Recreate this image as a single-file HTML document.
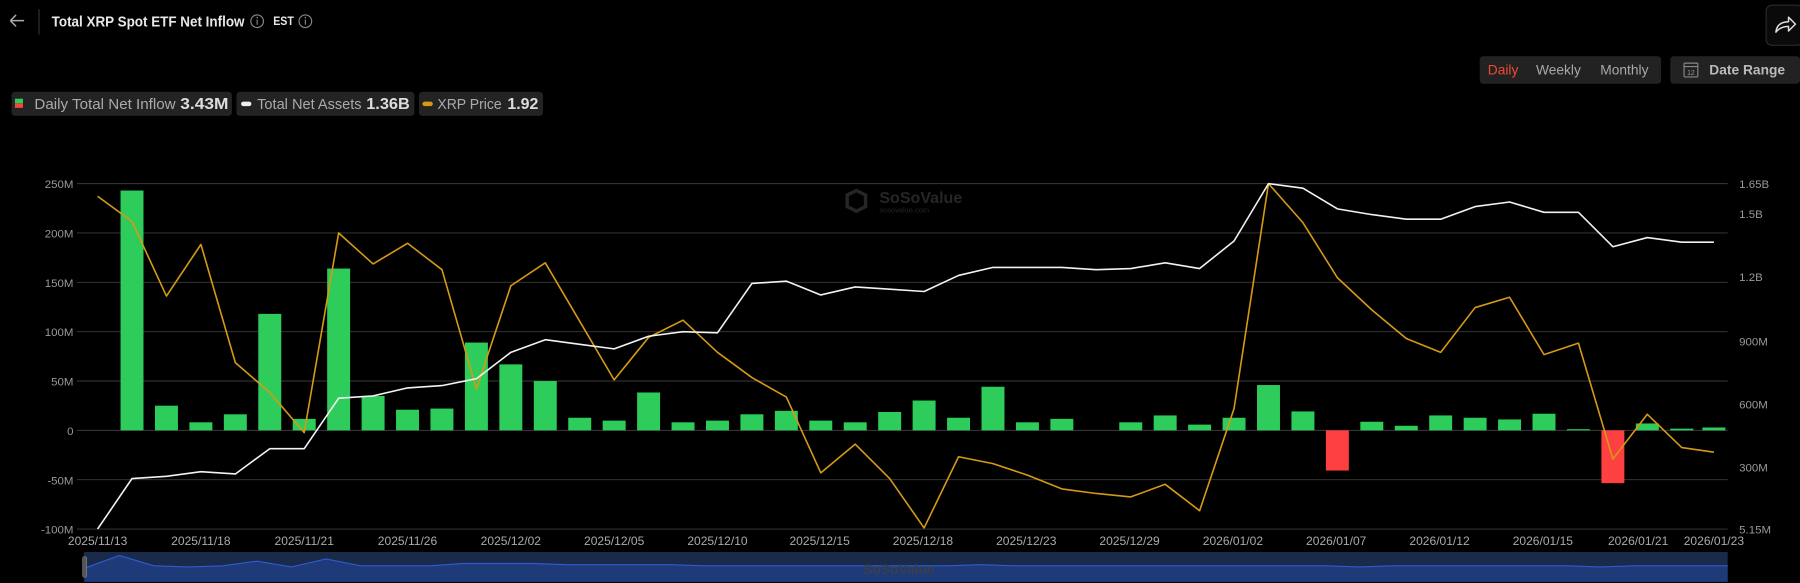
<!DOCTYPE html>
<html><head><meta charset="utf-8"><style>
html,body{margin:0;padding:0;background:#000;width:1800px;height:583px;overflow:hidden}
svg{display:block}
text{font-family:"Liberation Sans",sans-serif}
</style></head><body>
<svg width="1800" height="583" viewBox="0 0 1568 508" preserveAspectRatio="none" xmlns="http://www.w3.org/2000/svg">
<rect width="1568" height="508" fill="#000"/>
<!-- header -->
<path d="M9 18 H21 M9 18 L14 13 M9 18 L14 23" stroke="#aaa" stroke-width="1.3" fill="none"/>
<line x1="34" y1="8" x2="34" y2="30" stroke="#333"/>
<text x="45" y="23" font-size="12.5" font-weight="bold" fill="#e8e8e8" textLength="168" lengthAdjust="spacingAndGlyphs">Total XRP Spot ETF Net Inflow</text>
<circle cx="224" cy="18.5" r="5.5" stroke="#888" fill="none"/><line x1="224" y1="17" x2="224" y2="21.5" stroke="#888"/><circle cx="224" cy="15.3" r="0.7" fill="#888"/>
<text x="238" y="22" font-size="10.5" font-weight="bold" fill="#e8e8e8" textLength="18" lengthAdjust="spacingAndGlyphs">EST</text>
<circle cx="266" cy="18.5" r="5.5" stroke="#888" fill="none"/><line x1="266" y1="17" x2="266" y2="21.5" stroke="#888"/><circle cx="266" cy="15.3" r="0.7" fill="#888"/>
<rect x="1538.5" y="4.5" width="32" height="35" rx="5" fill="#0a0a0a" stroke="#2a2a2a"/>
<path d="M1547 28 Q1548 19 1558 19 V15 L1564 21 L1558 27 V23 Q1551 23 1547 28 Z" stroke="#ddd" stroke-width="1.3" fill="none" stroke-linejoin="round"/>
<!-- toggle -->
<rect x="1289" y="49" width="158" height="24" rx="3" fill="#222"/>
<text x="1296" y="65" font-size="12" fill="#ef4a32">Daily</text>
<text x="1338" y="65" font-size="12" fill="#a9a9a9">Weekly</text>
<text x="1394" y="65" font-size="12" fill="#a9a9a9">Monthly</text>
<rect x="1455" y="49" width="113" height="24" rx="3" fill="#222"/>
<rect x="1467" y="55" width="12" height="12" rx="1" stroke="#888" fill="none"/><line x1="1467" y1="58" x2="1479" y2="58" stroke="#888"/>
<text x="1473" y="65.5" font-size="6" fill="#999" text-anchor="middle">12</text>
<text x="1489" y="65" font-size="12" font-weight="bold" fill="#bbb">Date Range</text>
<!-- legend -->
<rect x="10" y="80" width="192" height="21" rx="3" fill="#232323"/>
<rect x="13" y="86" width="7" height="4" fill="#2ecc5a"/><rect x="13" y="90" width="7" height="4" fill="#ef4a3a"/>
<text x="30" y="95" font-size="12.5" fill="#aaa" textLength="123" lengthAdjust="spacingAndGlyphs">Daily Total Net Inflow</text>
<text x="157" y="95" font-size="13.5" font-weight="bold" fill="#ddd" textLength="42" lengthAdjust="spacingAndGlyphs">3.43M</text>
<rect x="206" y="80" width="155" height="21" rx="3" fill="#232323"/>
<rect x="210" y="88.5" width="9" height="4" rx="2" fill="#eee"/>
<text x="224" y="95" font-size="12.5" fill="#aaa" textLength="91" lengthAdjust="spacingAndGlyphs">Total Net Assets</text>
<text x="319" y="95" font-size="13.5" font-weight="bold" fill="#ddd" textLength="38" lengthAdjust="spacingAndGlyphs">1.36B</text>
<rect x="365" y="80" width="108" height="21" rx="3" fill="#232323"/>
<rect x="368" y="88.5" width="9" height="4" rx="2" fill="#d49a16"/>
<text x="381" y="95" font-size="12.5" fill="#aaa" textLength="56" lengthAdjust="spacingAndGlyphs">XRP Price</text>
<text x="442" y="95" font-size="13.5" font-weight="bold" fill="#ddd" textLength="27" lengthAdjust="spacingAndGlyphs">1.92</text>
<!-- grid -->
<g stroke="#3a3a3a" stroke-width="0.8">
<line x1="67" y1="160" x2="1505" y2="160"/><line x1="67" y1="203" x2="1505" y2="203"/><line x1="67" y1="246" x2="1505" y2="246"/><line x1="67" y1="289" x2="1505" y2="289"/><line x1="67" y1="332" x2="1505" y2="332"/><line x1="67" y1="375" x2="1505" y2="375"/><line x1="67" y1="418" x2="1505" y2="418"/><line x1="67" y1="461" x2="1505" y2="461"/>
</g>
<g font-size="10" fill="#999" text-anchor="end" style="font-family:'Liberation Serif',serif">
<text x="64" y="164">250M</text><text x="64" y="207">200M</text><text x="64" y="250">150M</text><text x="64" y="293">100M</text><text x="64" y="336">50M</text><text x="64" y="379">0</text><text x="64" y="422">-50M</text><text x="64" y="465">-100M</text>
</g>
<g font-size="10" fill="#999" style="font-family:'Liberation Serif',serif">
<text x="1515" y="164">1.65B</text><text x="1515" y="190">1.5B</text><text x="1515" y="245">1.2B</text><text x="1515" y="301">900M</text><text x="1515" y="356">600M</text><text x="1515" y="411">300M</text><text x="1515" y="465">5.15M</text>
</g>
<!-- watermark -->
<g fill="#262626"><path d="M738 170 L746 166 L754 170 V180 L746 184 L738 180 Z" fill="none" stroke="#262626" stroke-width="3"/>
<text x="766" y="177" font-size="14" font-weight="bold">SoSoValue</text><text x="766" y="185" font-size="6.5">sosovalue.com</text></g>
<!-- bars -->
<g fill="#2ecc5a">
<rect x="105" y="166" width="20" height="209"/><rect x="135" y="353.5" width="20" height="21.5"/><rect x="165" y="368" width="20" height="7"/><rect x="195" y="361" width="20" height="14"/><rect x="225" y="273.5" width="20" height="101.5"/><rect x="255" y="365" width="20" height="10"/><rect x="285" y="234" width="20" height="141"/><rect x="315" y="345" width="20" height="30"/><rect x="345" y="357" width="20" height="18"/><rect x="375" y="356" width="20" height="19"/><rect x="405" y="298.5" width="20" height="76.5"/><rect x="435" y="317.5" width="20" height="57.5"/><rect x="465" y="332" width="20" height="43"/><rect x="495" y="364" width="20" height="11"/><rect x="525" y="366.5" width="20" height="8.5"/><rect x="555" y="342" width="20" height="33"/><rect x="585" y="368" width="20" height="7"/><rect x="615" y="366.5" width="20" height="8.5"/><rect x="645" y="361" width="20" height="14"/><rect x="675" y="358" width="20" height="17"/><rect x="705" y="366.5" width="20" height="8.5"/><rect x="735" y="368" width="20" height="7"/><rect x="765" y="359" width="20" height="16"/><rect x="795" y="349" width="20" height="26"/><rect x="825" y="364" width="20" height="11"/><rect x="855" y="337" width="20" height="38"/><rect x="885" y="368" width="20" height="7"/><rect x="915" y="365" width="20" height="10"/><rect x="975" y="368" width="20" height="7"/><rect x="1005" y="362" width="20" height="13"/><rect x="1035" y="370" width="20" height="5"/><rect x="1065" y="364" width="20" height="11"/><rect x="1095" y="335.5" width="20" height="39.5"/><rect x="1125" y="358.5" width="20" height="16.5"/><rect x="1185" y="367.5" width="20" height="7.5"/><rect x="1215" y="371" width="20" height="4"/><rect x="1245" y="362" width="20" height="13"/><rect x="1275" y="364" width="20" height="11"/><rect x="1305" y="365.5" width="20" height="9.5"/><rect x="1335" y="360.5" width="20" height="14.5"/><rect x="1365" y="374" width="20" height="1"/><rect x="1425" y="369" width="20" height="6"/><rect x="1455" y="373.5" width="20" height="1.5"/><rect x="1483" y="372.5" width="20" height="2.5"/>
</g>
<g fill="#ff4040"><rect x="1155" y="375" width="20" height="35"/><rect x="1395" y="375" width="20" height="46"/></g>
<!-- lines -->
<polyline fill="none" stroke="#d49a16" stroke-width="1.4" stroke-linejoin="round" points="85,171 115,193 145,258 175,213 205,316 235,342 265,377 295,203 325,230 355,212 385,235 415,339 445,249 475,229 505,280 535,331 565,294 595,279 625,307 655,329 685,346 715,412 745,387 775,417 805,460 835,398 865,404 895,414 925,426 955,430 985,433 1015,422 1045,445 1075,356 1105,160 1135,194 1165,242 1195,270 1225,295 1255,307 1285,268 1315,259 1345,309 1375,299 1405,400 1435,361 1465,390 1493,394"/>
<polyline fill="none" stroke="#f2f2f2" stroke-width="1.4" stroke-linejoin="round" points="85,461 115,417 145,415 175,411 205,413 235,391 265,391 295,347 325,345 355,338 385,336 415,330 445,307 475,296 505,300 535,304 565,293 595,289 625,290 655,247 685,245 715,257 745,250 775,252 805,254 835,240 865,233 895,233 925,233 955,235 985,234 1015,229 1045,234 1075,210 1105,160 1135,164 1165,182 1195,187 1225,191 1255,191 1285,180 1315,176 1345,185 1375,185 1405,215 1435,207 1465,211 1493,211"/>
<!-- x labels -->
<g font-size="10.5" fill="#aaa" text-anchor="middle">
<text x="85" y="475">2025/11/13</text><text x="175" y="475">2025/11/18</text><text x="265" y="475">2025/11/21</text><text x="355" y="475">2025/11/26</text><text x="445" y="475">2025/12/02</text><text x="535" y="475">2025/12/05</text><text x="625" y="475">2025/12/10</text><text x="714" y="475">2025/12/15</text><text x="804" y="475">2025/12/18</text><text x="894" y="475">2025/12/23</text><text x="984" y="475">2025/12/29</text><text x="1074" y="475">2026/01/02</text><text x="1164" y="475">2026/01/07</text><text x="1254" y="475">2026/01/12</text><text x="1344" y="475">2026/01/15</text><text x="1427" y="475">2026/01/21</text><text x="1493" y="475">2026/01/23</text>
</g>
<!-- navigator -->
<rect x="73" y="481" width="1432" height="26" fill="#1a2a4a"/>
<polygon fill="#1f3a78" points="74,507 74,495 104,484 134,493 164,494 194,493 224,489 254,494 284,487 314,493 344,493 374,493 404,491 434,491 464,491 494,492 524,492 554,492 584,492 614,493 644,493 674,493 704,493 734,493 764,493 794,493 824,493 854,492 884,493 914,493 944,493 974,493 1004,493 1034,493 1064,493 1094,493 1124,493 1154,493 1184,494 1214,493 1244,493 1274,493 1304,493 1334,493 1364,493 1394,494 1424,493 1454,493 1484,493 1505,493 1505,507"/>
<polyline fill="none" stroke="#2e5bd0" stroke-width="1" points="74,495 104,484 134,493 164,494 194,493 224,489 254,494 284,487 314,493 344,493 374,493 404,491 434,491 464,491 494,492 524,492 554,492 584,492 614,493 644,493 674,493 704,493 734,493 764,493 794,493 824,493 854,492 884,493 914,493 944,493 974,493 1004,493 1034,493 1064,493 1094,493 1124,493 1154,493 1184,494 1214,493 1244,493 1274,493 1304,493 1334,493 1364,493 1394,494 1424,493 1454,493 1484,493 1505,493"/>
<rect x="72" y="485" width="3.5" height="18" rx="1.5" fill="#555" stroke="#888" stroke-width="0.5"/>
<text x="752" y="500" font-size="12" font-weight="bold" fill="#3a3f4a">SoSoValue</text>
</svg>
</body></html>
